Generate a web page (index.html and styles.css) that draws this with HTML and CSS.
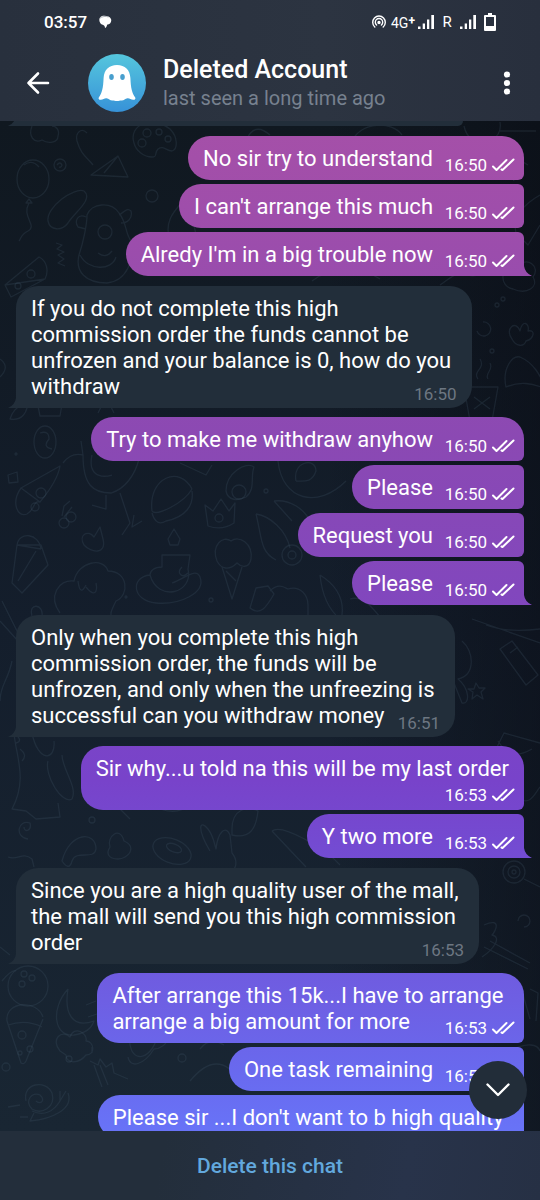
FILE: index.html
```html
<!DOCTYPE html>
<html lang="en">
<head>
<meta charset="utf-8">
<meta name="viewport" content="width=device-width, initial-scale=1">
<title>Deleted Account</title>
<link rel="stylesheet" href="styles.css">
</head>
<body>
<svg class="defs" aria-hidden="true">
  <symbol id="ticks" viewBox="0 0 24 14"><path d="M2 8.500l3.500 3.500L15.500 2M10.500 11.500l1 .5L22.500 1.500" fill="none" stroke="currentColor" stroke-width="2" stroke-linecap="round" stroke-linejoin="round"/></symbol>
  <symbol id="signal" viewBox="0 0 16 16"><path d="M0 12.500h2.500V15H0zM4.700 9.500H7V15H4.700zM9 5.500h2.300V15H9zM13.300 1h2.700v14h-2.700z" fill="currentColor"/></symbol>
</svg>

<header class="top">
  <div class="status">
    <span class="clock">03:57</span>
    <svg class="bubble-icon" viewBox="0 0 14 14"><path d="M4 1C7 .3 12 1 13 4c1 3-1 5.500-4 5.800C9 11 8.500 12.500 7 13c0-2-1-3-3-3.500C1.500 8.800-.500 3 4 1z" fill="#fff"/><path d="M1.500 3.500C4 1.200 8 1 10.500 2" fill="none" stroke="#8d949e" stroke-width=".7"/></svg>
    <span class="status-right">
      <svg class="hotspot" viewBox="0 0 16 14" fill="none" stroke="currentColor" stroke-width="1.400" stroke-linecap="round"><path d="M3.800 12a6.300 6.300 0 1 1 8.400 0M5.600 10a3.700 3.700 0 1 1 4.800 0"/><circle cx="8" cy="7.500" r="1" fill="currentColor"/></svg>
      <span class="net">4G<b>+</b></span>
      <svg class="signal"><use href="#signal"/></svg>
      <span class="roam">R</span>
      <svg class="signal"><use href="#signal"/></svg>
      <svg class="battery" viewBox="0 0 12 18"><path d="M4 0h4v2h3q1 0 1 1v14q0 1-1 1H1q-1 0-1-1V3q0-1 1-1h3zM2 4v9h8V4z" fill="currentColor" fill-rule="evenodd"/></svg>
    </span>
  </div>
  <div class="bar">
    <button class="icon-btn back" aria-label="Back"><svg viewBox="0 0 24 24"><path d="M22 12H2.500M12 2.500L2.500 12l9.500 9.500" fill="none" stroke="currentColor" stroke-width="2.600" stroke-linecap="round" stroke-linejoin="round"/></svg></button>
    <svg class="avatar" viewBox="0 0 58 58">
      <defs><linearGradient id="av" x2="0" y2="1"><stop stop-color="#55c6dd"/><stop offset="1" stop-color="#3792d8"/></linearGradient></defs>
      <circle cx="29" cy="29" r="29" fill="url(#av)"/>
      <path d="M29 11c-8 0-13 5-13.400 13C15.200 34 14 39 10.800 43.500c-.8 1.300.3 2.500 2 2.300 2.200-.3 3.700-1.800 5.700-1.600 2.500.3 3.300 2.300 5.800 2.300 2 0 2.700.5 4.700.5s2.700-.5 4.700-.5c2.500 0 3.300-2 5.800-2.300 2-.2 3.500 1.300 5.700 1.600 1.700.2 2.800-1 2-2.300C44 39 42.800 34 42.400 24 42 16 37 11 29 11z" fill="#fff"/>
      <ellipse cx="23.500" cy="23" rx="2.300" ry="3" fill="#489fce"/><ellipse cx="34.500" cy="23" rx="2.300" ry="3" fill="#489fce"/>
    </svg>
    <div class="who">
      <h1 class="name">Deleted Account</h1>
      <p class="seen">last seen a long time ago</p>
    </div>
    <button class="icon-btn more" aria-label="More options"><svg viewBox="0 0 24 24" fill="currentColor"><circle cx="12" cy="3.500" r="3.100"/><circle cx="12" cy="12" r="3.100"/><circle cx="12" cy="20.500" r="3.100"/></svg></button>
  </div>
</header>

<main class="chat">
  <svg class="doodles" viewBox="0 0 540 1010" preserveAspectRatio="xMidYMin slice" aria-hidden="true">
    <!-- balloon, palette, horn, plane -->
    <ellipse cx="33" cy="58" rx="16" ry="19"/><path d="M24 44q8-6 15 2M29 78l-3 4h6zM29 82c-8 14 9 22-1 28-8 4-7 8-9 10"/>
    <circle cx="60" cy="44" r="6"/><path d="M57 44q3-4 5 0-1 3-3 2M32 5c-4 10 2 18 10 14 6 4 16 3 16-4 2-6-2-10-6-10"/>
    <path d="M87 12c-6-6-12 0-10 8 4 14 10 16 16 24M91 54l27-19 10 21zM118 35l-14 17"/>
    <path d="M134 22c-6-18 18-28 36-14 8 8 8 20 2 22-6 0-8-6-14-2-4 4 0 8-6 8-8 0-16-6-18-14z"/><circle cx="147" cy="12" r="4"/><circle cx="159" cy="11" r="3"/><circle cx="142" cy="22" r="4"/><circle cx="168" cy="18" r="3"/>
    <!-- calf -->
    <path d="M48 100c-2-14 26-34 36-30 10 8-10 22-16 32-6 8-18 8-20-2zM87 94c4-12 24-14 32-2 8 10 6 20 12 28 4 18-4 40-24 42-22 0-32-12-28-28 4-12 8-30 8-40zM86 96c-8-4-12 4-8 10l8 2M119 94c4-2 8-8 12-4 2 8-4 12-10 12M80 134c8 16 32 16 36 2M98 132q8 6 14-2"/><circle cx="105" cy="111" r="7"/><circle cx="152" cy="75" r="6"/>
    <path d="M5 164l34-28c8 4 10 14 6 22zM5 164l6 12 34-18M56 122l6 2-5 4 7 3-6 3 6 4-6 4 7 3"/><circle cx="31" cy="153" r="4"/><circle cx="18" cy="165" r="3"/>
    <path d="M170 120c-8-24 10-34 18-46l8 40M246 20q8-20 24-6M352 20c10-20 40-20 50-6M464 5q4 20 28 14 10-6 8-18M500 10h36M528 44c-12-10-24 0-14 16M540 74c-14 8-28 20-24 38l12 12 12-20M312 160c20-16 50-14 68-2M440 164c10-6 14-14 28-10 10 4 20-6 24-10M477 210a7 7 0 1 0 6-9"/>
    <path d="M513 168c-14-2-14-24 4-22 10-12 24 0 16 10 6 10-6 18-20 12zM512 218c-8-10 4-20 8-8 2-12 10-8 8 0 8-2 6 8-2 10-2 6-10 6-14-2zM506 266c-4-18 6-32 14-30 14 6 20 18 26 32-14-6-26-8-40-2zM464 266l6 34h22l6-34zM478 258c-6-8 8-10 2-20M488 258c-4-6 6-8 2-16M474 276l16 12M490 276l-16 12"/><circle cx="503" cy="178" r="2"/><circle cx="497" cy="184" r="2"/><circle cx="492" cy="230" r="2"/>
    <path d="M0 238c8 6 6 12 0 18M10 298c4-12 10-12 18-20 0 14-6 22-18 20zM38 285l24-2-2 12H40zM222 284l44 2M98 292l8-16 8 16"/>
    <!-- avocado, bird, pizza, burger, crown -->
    <ellipse cx="45" cy="321" rx="11" ry="16"/><path d="M40 312q9-3 9 6-7 8 3 10M8 354l9-3 1 10-9 1zM21 367l39-22c-2 12-10 24-20 36zM21 367c-10 14-4 30 6 26 8-4 6-14 13-12"/><circle cx="41" cy="372" r="5"/><circle cx="35" cy="386" r="4"/><path d="M63 342c6-8 12-10 20-8l-2-14M83 334c0 30 10 38 28 38 14-4 24-18 28-34l-14-2M92 334c-4 18 6 24 20 20M106 374l0 14-14-4M120 372l10 30-8 12M134 394l-2 12 10-6M62 395l2-10 6-5M64 396l8-10"/><circle cx="64" cy="402" r="5"/><circle cx="71" cy="396" r="5"/>
    <path d="M152 390c-4-34 28-46 40-22M152 390c4 6 32-8 40-22M152 392q4 14 14 8c20-4 28-16 26-30M226 370c0-18 20-30 28-24-4 10 2 22-8 30-8 4-18 4-20-6z"/><circle cx="239" cy="371" r="7"/><path d="M205 384l8 6 8-12 8 12 6-8-1 20q-12 8-26 3z"/><circle cx="219" cy="397" r="4"/>
    <path d="M180 342l26 12 6-10M278 340c4 40 40 48 68 20M296 360c-4-20 20-24 20-10-4 12-12 10-20 10M274 380c16-2 30 8 36 20M274 380l18 20M256 393c14 2 30 16 34 34M256 393c6 24 4 38 20 46"/><circle cx="292" cy="434" r="10"/><circle cx="292" cy="434" r="4"/>
    <!-- cake, cherry, trees, cup, ice cream, sheep -->
    <path d="M17 424c2-14 22-12 24 4M17 424l-5 38 10 10 26-28-7-20zM17 424l24 4M18 460l18-30M84 424c-6-10 4-16 10-8l6-10 3 12c4 16-12 14-19 6zM168 418l6-10 6 10-2 6h-8z"/>
    <path d="M60 492c-12-16-2-34 14-32 4-20 30-24 34-10 20 0 22 24 8 30-6 12-6 14-4 16M78 460q2 16 8 4M86 466c8 10 12 6 10-4M162 434h28l-2 14c6 24-30 34-38 6 0-4 4-8 12-8zM150 454c-20 2-18 26 6 28 24 2 50-10 44-26-4-10-16 2-28 6M182 446c-6 6 0 12 6 6M217 440c-6-16 6-26 14-20 8-6 22 2 20 18-2 10-10 8-14 4-8 8-16 6-20-2zM222 446l10 32 10-32M226 450l10 10"/>
    <path d="M250 487l6-20 12-2 6 8c-8 14-14 22-24 14zM270 470c8-8 14-4 18-2 12-4 20 6 20 16v14M320 454c16 10 24 24 22 40M320 454c2 20 8 34 20 44M350 478c12-4 22 8 30 18M32 495c-4-14 12-12 10 0M2 480l16 32"/>
    <!-- figures either side of the lower bubbles -->
    <path d="M0 500l18 20M12 540c-4 20-12 24-12 40M472 498l68 24M486 504q20 8 54 4M462 520c12 10 14 34-4 38 12 10 12 26 4 24l-8-20M500 528l12-8 26 34-12 10zM510 532l8-6M476 562l3 5h6l-4 4 2 7-6-4-5 4 1-7-5-3h6z"/>
    <path d="M14 612c2 24 14 46-2 76l14 2 10 8 24-2-2-14M14 612q10 8 2 10M20 628q8 6 2 12M48 640c-4 14 14 44 24 38 6-12-10-30-10-44M32 612c6 30 24 28 22 8"/><path d="M494 632l10-20 36 10M498 620c10 16 20 16 34 8M520 678c10 6 14-4 20-12M28 718c-14-2-10-20 2-16 2 8-6 10-6 4"/>
    <g transform="translate(0 -40)"><path d="M62 780c8-30 34-30 34-12-2 12-20 0-24 12-2 8-6 6-10 0zM110 766c-4-10 10-22 14-6 14 6 4 18-6 18-10 0-12-6-8-12z"/><ellipse cx="172" cy="770" rx="20" ry="12" transform="rotate(22 172 770)"/><ellipse cx="174" cy="767" rx="8" ry="4" transform="rotate(22 174 767)"/>
    <path d="M210 770c-14-24-10-32-2-22 6 8 6 14 8 20 2-18 10-24 14-14l2 18c8 10 2 20-4 20M232 748c0-20 16-24 26-18-2 18-8 28-26 24zM272 750c10-8 54 18 68 34M272 750l34 36M120 728l10 10M160 728q18 6 30-4M8 776c10 4 14-6 24 2l2 8"/></g>
    <circle cx="514" cy="751" r="11"/><circle cx="514" cy="751" r="6"/><circle cx="514" cy="751" r="2"/><path d="M524 758l16 8M518 800a6 6 0 1 1 6 6M484 804c18-8 12 6 8 10 10 2 2 14-10 22M484 826l44 22M490 820l40 22M522 870l8 28M530 868l8 4-2 28"/>
    <!-- bowling ball, moon, pizza, snail -->
    <circle cx="28" cy="865" r="20"/><circle cx="24" cy="853" r="3"/><circle cx="32" cy="857" r="3"/><circle cx="22" cy="863" r="3"/><path d="M68 868c-18 20-14 48 6 46 14-2 18-8 20-14-22 8-30-8-26-32M86 884l10-4M88 896l12-4M7 900c-2-20 30-22 36-4M7 900l14 42q3 2 5-2l17-42M8 904q18-6 34 2"/><circle cx="22" cy="914" r="4"/><circle cx="30" cy="928" r="3"/><circle cx="20" cy="932" r="2"/>
    <path d="M60 930c-10-12 2-22 10-14 4-12 18-4 16 4 8 0 10 14 0 14-8 10-20 8-20 0zM130 912c-4 30 20 32 28 2l8 0c4 10-8 14-12 14-10 16-24 20-26 8M200 928c6-8 14-10 24-4M0 826l10 8M2 860q10-12 14-10M132 870l6-4M510 930c18-10 28-6 30 0M92 926l0 6"/>
    <path d="M26 980c-4-18 20-22 26-8 4 14-10 22-20 16-8-8 0-18 8-14 6 6 0 10-4 6M32 990c12 6 22 0 28-10l0-10M60 980l6-10M68 972c6 16-16 26-38 28l4-8M8 986l12-2M20 996h8M90 940l8 4 2-6 6 8 6-4 2 10 14 6M94 944l8 22M100 944l8 20M190 960q28-34 50 0"/><circle cx="69" cy="938" r="3"/><circle cx="6" cy="946" r="4"/><circle cx="182" cy="937" r="4"/><circle cx="114" cy="915" r="1"/><circle cx="126" cy="476" r="1"/><circle cx="211" cy="479" r="2"/><circle cx="266" cy="370" r="2"/><circle cx="16" cy="333" r="1"/><circle cx="92" cy="699" r="3"/>
  </svg>

  <div class="messages">
    <div class="msg in earlier"></div>

    <div class="msg out first"><p class="text">No sir try to understand<i class="room"></i></p><span class="meta">16:50<svg class="ticks"><use href="#ticks"/></svg></span></div>
    <div class="msg out"><p class="text">I can't arrange this much<i class="room"></i></p><span class="meta">16:50<svg class="ticks"><use href="#ticks"/></svg></span></div>
    <div class="msg out tail"><p class="text">Alredy I'm in a big trouble now<i class="room"></i></p><span class="meta">16:50<svg class="ticks"><use href="#ticks"/></svg></span></div>

    <div class="msg in"><p class="text">If you do not complete this high<br>commission order the funds cannot be<br>unfrozen and your balance is 0, how do you&nbsp;<br>withdraw</p><span class="meta">16:50</span></div>

    <div class="msg out first"><p class="text">Try to make me withdraw anyhow<i class="room"></i></p><span class="meta">16:50<svg class="ticks"><use href="#ticks"/></svg></span></div>
    <div class="msg out"><p class="text">Please<i class="room"></i></p><span class="meta">16:50<svg class="ticks"><use href="#ticks"/></svg></span></div>
    <div class="msg out"><p class="text">Request you<i class="room"></i></p><span class="meta">16:50<svg class="ticks"><use href="#ticks"/></svg></span></div>
    <div class="msg out tail"><p class="text">Please<i class="room"></i></p><span class="meta">16:50<svg class="ticks"><use href="#ticks"/></svg></span></div>

    <div class="msg in"><p class="text">Only when you complete this high<br>commission order, the funds will be<br>unfrozen, and only when the unfreezing is&nbsp;<br>successful can you withdraw money</p><span class="meta">16:51</span></div>

    <div class="msg out first stacked"><p class="text">Sir why...u told na this will be my last order</p><span class="meta">16:53<svg class="ticks"><use href="#ticks"/></svg></span></div>
    <div class="msg out tail"><p class="text">Y two more<i class="room"></i></p><span class="meta">16:53<svg class="ticks"><use href="#ticks"/></svg></span></div>

    <div class="msg in"><p class="text">Since you are a high quality user of the mall,&nbsp;<br>the mall will send you this high commission<br>order</p><span class="meta">16:53</span></div>

    <div class="msg out first"><p class="text">After arrange this 15k...I have to arrange&nbsp;<br>arrange a big amount for more<i class="room"></i></p><span class="meta">16:53<svg class="ticks"><use href="#ticks"/></svg></span></div>
    <div class="msg out"><p class="text">One task remaining<i class="room"></i></p><span class="meta">16:53<svg class="ticks"><use href="#ticks"/></svg></span></div>
    <div class="msg out"><p class="text">Please sir ...I don't want to b high quality&nbsp;</p></div>
  </div>

  <button class="scroll-down" aria-label="Scroll to bottom"><svg viewBox="0 0 24 14"><path d="M1.500 1.500L12 12 22.500 1.500" fill="none" stroke="currentColor" stroke-width="2.400" stroke-linecap="round" stroke-linejoin="round"/></svg></button>
</main>

<footer class="bottom"><button class="delete">Delete this chat</button></footer>
</body>
</html>
```
FILE: styles.css
```css
* { box-sizing: border-box; }
body {
  margin: 0;
  height: 100vh;
  display: flex;
  flex-direction: column;
  background: #141d28;
  color: #fff;
  font-family: Roboto, "Liberation Sans", sans-serif;
}
h1, p { margin: 0; }
button { border: 0; padding: 0; background: none; color: inherit; font: inherit; cursor: pointer; }
.defs { display: none; }

.top { flex: none; background: linear-gradient(90deg, #28303d, #2c3441 60%, #282f3d); }
.status { display: flex; align-items: center; height: 44px; padding: 0 44px; }
.clock { font-size: 17px; font-weight: 500; }
.bubble-icon { width: 14px; height: 14px; margin-left: 11px; }
.status-right { display: flex; align-items: center; margin-left: auto; }
.hotspot { width: 16px; height: 14px; margin-right: 4px; }
.net { width: 27px; font-size: 14px; }
.net b { font-size: 12px; vertical-align: 3px; }
.signal { width: 16px; height: 16px; }
.roam { width: 26px; text-align: center; font-size: 15px; }
.battery { width: 12px; height: 18px; margin-left: 8px; }

.bar { display: flex; align-items: center; height: 77px; padding: 0 21px 0 26px; }
.icon-btn { display: grid; place-items: center; width: 24px; height: 48px; }
.icon-btn svg { width: 24px; height: 24px; }
.avatar { width: 58px; height: 58px; margin: 0 17px 0 38px; }
.who { flex: 1; }
.name { font-size: 25px; font-weight: 500; line-height: 30px; }
.seen { font-size: 20px; line-height: 26px; color: #77818f; }

.chat {
  position: relative;
  flex: 1;
  min-height: 0;
  overflow: hidden;
  background:
    linear-gradient(90deg, transparent 60%, rgba(8, 10, 18, .5)),
    linear-gradient(#101820, #141e2c 50%, #192633);
}
.doodles {
  position: absolute;
  inset: 0;
  width: 100%;
  height: 100%;
  fill: none;
  stroke: #4a6072;
  stroke-opacity: .22;
  stroke-width: 1.3;
  stroke-linejoin: round;
}
.messages { position: relative; display: flex; flex-direction: column; padding: 0 16px; }

.msg { position: relative; display: grid; max-width: 94%; padding: 10px 15px 8px; }
.text, .meta { grid-area: 1 / 1; }
.text { font-size: 22px; line-height: 26px; }
.meta {
  display: flex;
  align-items: center;
  align-self: end;
  justify-self: end;
  font-size: 17px;
  line-height: 20px;
}
.room { display: inline-block; width: 76px; }
.ticks { width: 24px; height: 14px; margin-left: 4px; }

.in {
  align-self: flex-start;
  margin-top: 10px;
  border-radius: 22px 22px 22px 0;
  background: #222e3a;
}
.in .meta { margin-bottom: -4px; color: #6d7782; }
.earlier { width: 88%; height: 5px; margin-top: 0; padding: 0; border-radius: 0 0 22px 0; }

.out {
  align-self: flex-end;
  margin-top: 4px;
  border-radius: 22px 6px 6px 22px;
  background: linear-gradient(#aa54a6, #a34fa9 160px, #8b49b3 440px, #8247bd 590px, #7843ca 780px, #744ad1 840px, #6e5fe3 1000px, #6969ee 1070px, #6873f7 1130px) fixed;
}
.out .meta { margin: 0 -6px -3px 0; }
.first { margin-top: 9px; border-top-right-radius: 22px; }
.earlier + .first { margin-top: 10px; }
.tail { border-bottom-right-radius: 0; }
.stacked { row-gap: 3px; }
.stacked .meta { grid-row: 2; }

.in::before, .tail::after {
  content: "";
  position: absolute;
  bottom: 0;
  width: 8px;
  height: 10px;
  background: inherit;
}
.in::before { left: -8px; clip-path: path("M8 0Q7 7 0 10H8Z"); }
.tail::after { right: -8px; clip-path: path("M0 0Q1 7 8 10H0Z"); }

.scroll-down {
  position: absolute;
  right: 13px;
  bottom: 12px;
  display: grid;
  place-items: center;
  width: 58px;
  height: 58px;
  border-radius: 50%;
  background: #222d39;
}
.scroll-down svg { width: 24px; height: 14px; }

.bottom { flex: none; display: grid; height: 69px; background: linear-gradient(100deg, #232e3b 30%, #28334a 75%, #263044); }
.delete { font-size: 21px; font-weight: 500; color: #62a8dd; }
```
